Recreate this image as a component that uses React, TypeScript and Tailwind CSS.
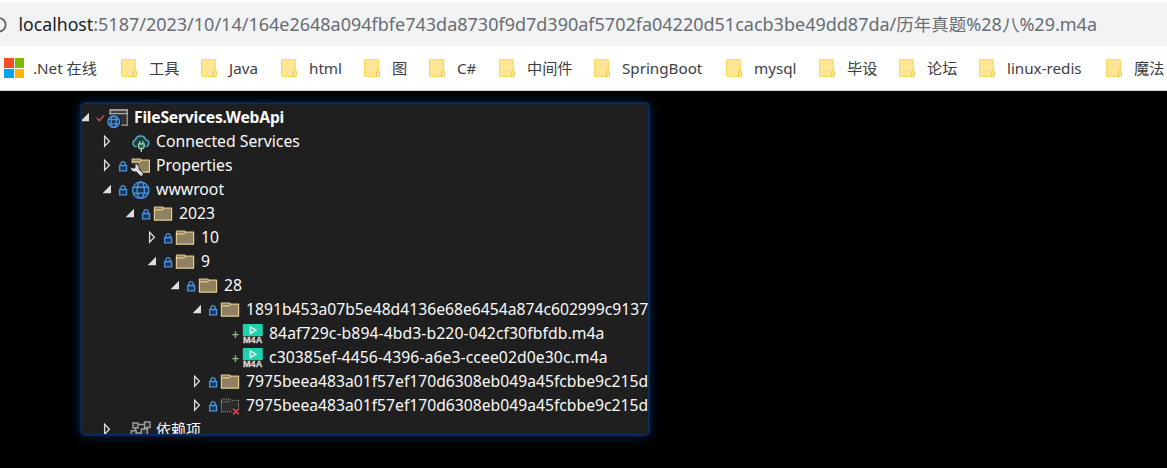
import React from "react";

const Globe = ({ cx, cy, r }: { cx: number; cy: number; r: number }) => (
  <g fill="none" stroke="#4a94e0" strokeWidth="1.3">
    <circle cx={cx} cy={cy} r={r} fill="#1d3550" />
    <ellipse cx={cx} cy={cy} rx={r * 0.45} ry={r} />
    <path d={`M${cx - r * 0.9} ${cy - r * 0.36}H${cx + r * 0.9}M${cx - r * 0.9} ${cy + r * 0.36}H${cx + r * 0.9}`} />
  </g>
);

const FolderShape = () => (
  <g stroke="#e3ca8e" strokeWidth="1.2" strokeLinejoin="round">
    <path d="M1.4 5h8l1.6 1.2h7.6v12H1.4z" fill="#8f8160" />
    <path d="M1.4 7.8h7.8l1.8-1.6" fill="none" />
  </g>
);

type Kind = "project" | "connected" | "properties" | "globe" | "folder" | "m4a" | "missing" | "deps";

const Icon = ({ kind }: { kind: Kind }) => (
  <svg className="h-6 w-[26px] shrink-0 overflow-visible" viewBox="0 0 26 24">
    {kind === "project" && (
      <>
        <path d="M2.3 9V4h17v15.3h-6" fill="#303030" stroke="#8c8c8c" strokeWidth="1.5" />
        <path d="M2.3 4h17v3.6h-17z" fill="#444" stroke="#aaa" strokeWidth="1.3" />
        <circle cx="5.7" cy="15.7" r="7.2" fill="#1f1f1f" />
        <Globe cx={5.7} cy={15.7} r={5.8} />
      </>
    )}
    {kind === "connected" && (
      <>
        <path d="M6.8 16.6H5.8a3.4 3.4 0 0 1-.4-6.6 5.4 5.4 0 0 1 10.3-.4 3.6 3.6 0 0 1 .6 7h-.8" fill="#213c43" stroke="#4fb0c6" strokeWidth="1.4" />
        <path d="M7.2 12h8v6.5h-8z" fill="#1f1f1f" />
        <path d="M9.8 11v3M12.8 11v3M11.3 18v4" stroke="#8fe0c0" strokeWidth="1.3" fill="none" />
        <path d="M8.4 13.8h5.8v2.2a2.9 2.9 0 0 1-5.8 0z" fill="#376353" stroke="#8fe0c0" strokeWidth="1.2" />
      </>
    )}
    {kind === "properties" && (
      <>
        <g transform="translate(.8 0)"><FolderShape /></g>
        <path d="M0 9.2h7.8l1.8 5.4 4 5v3.6H0z" fill="#1f1f1f" />
        <path d="M5.4 10a4 4 0 0 1 3.2 5l3.8 4a1.6 1.6 0 0 1-2.3 2.3l-3.9-4A4 4 0 0 1 .8 13.4l2.8 1.4 2-1.6z" fill="#dcdcdc" />
      </>
    )}
    {kind === "globe" && <Globe cx={10.7} cy={12.2} r={8.2} />}
    {kind === "folder" && <FolderShape />}
    {kind === "m4a" && (
      <>
        <rect x="-.2" y="2" width="20" height="12.2" rx="1" fill="#20cfae" />
        <path d="M7.3 4.8l5.7 3.4-5.7 3.4z" fill="#43d9bd" stroke="#d5fff3" strokeWidth="1.3" />
        <text x="0" y="21.4" textLength="19.2" lengthAdjust="spacingAndGlyphs" fill="#d6d6d6" stroke="#d6d6d6" strokeWidth=".3" className="font-['Liberation_Sans'] text-[8.5px] font-bold">M4A</text>
      </>
    )}
    {kind === "missing" && (
      <>
        <path d="M1.4 5h8l1.6 1.2h7.6v11.6H1.4zM1.4 7.8h7.8" fill="#2b2b2b" stroke="#a5a5a5" strokeWidth="1.1" strokeDasharray="1.1 1.1" />
        <path d="M12 13.4h8.5v8.5H12z" fill="#1f1f1f" />
        <path d="M13 14.6l5.8 5.8m0-5.8l-5.8 5.8" stroke="#d84550" strokeWidth="1.6" />
      </>
    )}
    {kind === "deps" && (
      <g fill="#303030" stroke="#9c9c9c" strokeWidth="1.4">
        <path d="M7 6.5h7M6 15h6M5 9l1 5" />
        <path d="M3 5h5v5H3zM14.5 4h5.5v5.5h-5.5zM1.2 12.8h5v5h-5zM11.2 11h6.2v6.2h-6.2z" />
      </g>
    )}
  </svg>
);

const Arrow = ({ state }: { state?: "open" | "closed" }) => (
  <svg className="h-6 w-[15px] shrink-0 overflow-visible" viewBox="0 0 15 24">
    {state === "open" && <path d="M7 6.8v8.4h-8.4z" fill="#dedede" />}
    {state === "closed" && <path d="M.6 6.3l4.8 5L.6 16.2z" fill="none" stroke="#dedede" strokeWidth="1.3" />}
  </svg>
);

const Mark = ({ mark }: { mark?: "lock" | "check" | "plus" }) => (
  <svg className="h-6 w-[11px] shrink-0 overflow-visible" viewBox="0 0 11 24">
    {mark === "lock" && (
      <g stroke="#4a94e0" strokeWidth="1.3">
        <path d="M2 11.2V9.8a2.1 2.1 0 0 1 4.2 0v1.4" fill="none" />
        <path d="M.6 11.5h7v5.4h-7z" fill="#1e3a5a" />
      </g>
    )}
    {mark === "check" && <path d="M-.2 12l2.6 2.8L7 9.4" fill="none" stroke="#d84a55" strokeWidth="1.4" />}
    {mark === "plus" && <path d="M.2 12.6h6.6M3.5 9.3v6.6" stroke="#7bc47b" strokeWidth="1.4" />}
  </svg>
);

type Row = { pad: string; arrow?: "open" | "closed"; mark?: "lock" | "check" | "plus"; icon: Kind; text: string; cls?: string };

const rows: Row[] = [
  { pad: "pl-0", arrow: "open", mark: "check", icon: "project", text: "FileServices.WebApi", cls: "text-[15.7px] font-bold tracking-[-0.23px]" },
  { pad: "pl-[22px]", arrow: "closed", icon: "connected", text: "Connected Services" },
  { pad: "pl-[22px]", arrow: "closed", mark: "lock", icon: "properties", text: "Properties" },
  { pad: "pl-[22px]", arrow: "open", mark: "lock", icon: "globe", text: "wwwroot" },
  { pad: "pl-[45px]", arrow: "open", mark: "lock", icon: "folder", text: "2023" },
  { pad: "pl-[67px]", arrow: "closed", mark: "lock", icon: "folder", text: "10" },
  { pad: "pl-[67px]", arrow: "open", mark: "lock", icon: "folder", text: "9" },
  { pad: "pl-[90px]", arrow: "open", mark: "lock", icon: "folder", text: "28" },
  { pad: "pl-[112px]", arrow: "open", mark: "lock", icon: "folder", text: "1891b453a07b5e48d4136e68e6454a874c602999c9137", cls: "text-[15.7px]" },
  { pad: "pl-[135px]", mark: "plus", icon: "m4a", text: "84af729c-b894-4bd3-b220-042cf30fbfdb.m4a", cls: "text-[15.75px] tracking-[0.07px]" },
  { pad: "pl-[135px]", mark: "plus", icon: "m4a", text: "c30385ef-4456-4396-a6e3-ccee02d0e30c.m4a", cls: "text-[15.75px] tracking-[0.07px]" },
  { pad: "pl-[112px]", arrow: "closed", mark: "lock", icon: "folder", text: "7975beea483a01f57ef170d6308eb049a45fcbbe9c215d", cls: "text-[15.7px]" },
  { pad: "pl-[112px]", arrow: "closed", mark: "lock", icon: "missing", text: "7975beea483a01f57ef170d6308eb049a45fcbbe9c215d", cls: "text-[15.7px]" },
  { pad: "pl-[22px]", arrow: "closed", icon: "deps", text: "依赖项", cls: "text-[15px]" },
];

const bookmarks = [
  { w: "w-20", text: "工具" },
  { w: "w-20", text: "Java" },
  { w: "w-[83px]", text: "html" },
  { w: "w-[65px]", text: "图" },
  { w: "w-[70px]", text: "C#" },
  { w: "w-[95px]", text: "中间件" },
  { w: "w-[132px]", text: "SpringBoot" },
  { w: "w-[93px]", text: "mysql" },
  { w: "w-20", text: "毕设" },
  { w: "w-20", text: "论坛" },
  { w: "w-[127px]", text: "linux-redis" },
  { w: "w-[70px]", text: "魔法" },
];

const BookmarkIcon = () => (
  <svg className="h-[18px] w-4 shrink-0" viewBox="0 0 16 18">
    <rect x=".6" y=".6" width="13.8" height="16.8" rx="1" fill="#ffe694" stroke="#fadb62" strokeWidth="1.2" />
    <path d="M12.5 12.5a1.5 1.5 0 0 1 3 0v3.7a1.3 1.3 0 0 1-1.3 1.3h-1.7z" fill="#ffe694" stroke="#f3cd4e" />
  </svg>
);

export default function App() {
  return (
    <div className="flex h-[468px] w-[1167px] flex-col overflow-hidden bg-black font-['Noto_Sans','Noto_Sans_CJK_SC',sans-serif]">
      <header className="flex h-[91px] shrink-0 flex-col border-b border-[#d0d3d6] bg-white pt-[3px]">
        <div className="flex h-[43px] shrink-0 items-center bg-[#f1f3f4]">
          <svg className="h-4 w-[18.5px] shrink-0" viewBox="0 0 18.5 16">
            <circle cx="-1.2" cy="7.8" r="6.8" fill="none" stroke="#5f6368" strokeWidth="1.8" />
          </svg>
          <span className="whitespace-nowrap pb-0.5 text-[18px] leading-6 text-[#6a6d72]">
            <span className="text-[17.7px] text-[#202124]">localhost</span>
            :5187/2023/10/14/164e2648a094fbfe743da8730f9d7d390af5702fa04220d51cacb3be49dd87da/
            <span className="text-[17.5px]">历年真题</span>%28
            <span className="text-[17.5px]">八</span>%29.m4a
          </span>
        </div>
        <nav className="flex h-11 shrink-0 items-center text-[15.2px] leading-6 text-[#3c4043]">
          <div className="flex w-[121px] shrink-0 items-center pl-1">
            <div className="grid size-5 shrink-0 grid-cols-2 gap-px">
              <i className="bg-[#f25022]" />
              <i className="bg-[#7fba00]" />
              <i className="bg-[#00a4ef]" />
              <i className="bg-[#ffb900]" />
            </div>
            <span className="ml-[9px] whitespace-nowrap">.Net 在线</span>
          </div>
          {bookmarks.map((b) => (
            <div key={b.text} className={`flex shrink-0 items-center gap-3 whitespace-nowrap ${b.w}`}>
              <BookmarkIcon />
              <span>{b.text}</span>
            </div>
          ))}
        </nav>
      </header>
      <main className="flex grow pl-[82px] pt-[13px]">
        <section className="h-[330px] w-[566px] overflow-hidden rounded-[3px] bg-[#1f1f1f] pt-0.5 shadow-[0_0_3px_1px_#0e4484,0_0_12px_2px_#08244a]">
          {rows.map((r, i) => (
            <div key={i} className={`flex h-6 items-center ${r.pad}`}>
              <Arrow state={r.arrow} />
              <Mark mark={r.mark} />
              <Icon kind={r.icon} />
              <span className={`whitespace-nowrap pb-0.5 leading-6 text-[#fafafa] ${r.cls ?? "text-[15.75px]"}`}>{r.text}</span>
            </div>
          ))}
        </section>
      </main>
    </div>
  );
}
